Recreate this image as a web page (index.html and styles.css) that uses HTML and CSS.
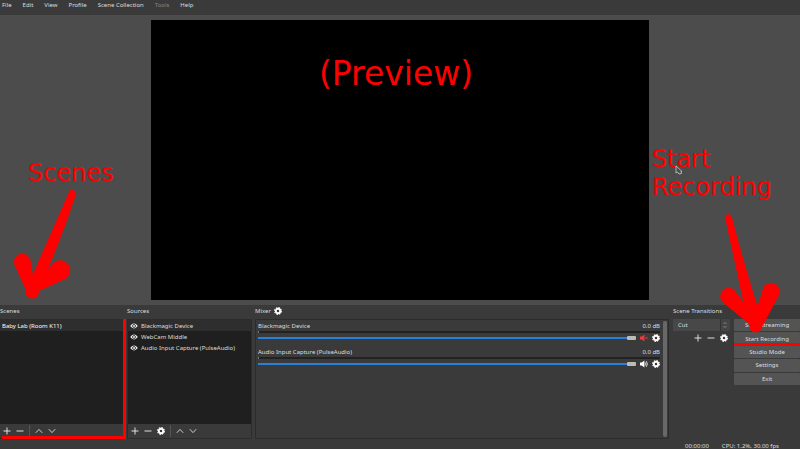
FILE: index.html
```html
<!DOCTYPE html>
<html lang="en">
<head>
<meta charset="utf-8">
<title>Studio</title>
<link rel="stylesheet" href="styles.css">
</head>
<body>
<svg class="defs" aria-hidden="true">
  <symbol id="plus" viewBox="0 0 8 8"><path d="M4 .5v7M.5 4h7" fill="none" stroke="currentColor"/></symbol>
  <symbol id="minus" viewBox="0 0 8 8"><path d="M.5 4h7" fill="none" stroke="currentColor"/></symbol>
  <symbol id="up" viewBox="0 0 8 8"><path d="M.8 5.8 4 2.4l3.2 3.4" fill="none" stroke="currentColor" stroke-width=".9"/></symbol>
  <symbol id="down" viewBox="0 0 8 8"><path d="M.8 2.2 4 5.6l3.2-3.4" fill="none" stroke="currentColor" stroke-width=".9"/></symbol>
  <symbol id="gear" viewBox="0 0 8 8"><circle cx="4" cy="4" r="2.2" fill="none" stroke="currentColor" stroke-width="1.9"/><circle cx="4" cy="4" r="3.4" fill="none" stroke="currentColor" stroke-width="1.1" stroke-dasharray="1.5 1.17"/></symbol>
  <symbol id="eye" viewBox="0 0 8 8"><path d="M.2 4Q4-.9 7.800 4 4 8.900.2 4z" fill="currentColor"/><circle cx="4" cy="4" r="1.500" fill="none" stroke="#222" stroke-width=".8"/></symbol>
  <symbol id="speaker" viewBox="0 0 8 8"><path d="M0 2.500h1.800L4.400.6v6.800L1.800 5.500H0z" fill="currentColor"/><path d="M5.300 2.500q1.200 1.500 0 3M6.300 1.200q2.200 2.800 0 5.600" fill="none" stroke="currentColor" stroke-width=".8"/></symbol>
  <symbol id="muted" viewBox="0 0 8 8"><path d="M0 2.500h1.800L4.400.6v6.800L1.800 5.500H0z" fill="currentColor"/><path d="m5.300 2.800 2.400 2.400m0-2.400L5.300 5.200" fill="none" stroke="currentColor" stroke-width=".8"/></symbol>
</svg>

<nav class="menubar">
  <button>File</button><button>Edit</button><button>View</button><button>Profile</button><button>Scene Collection</button><button disabled>Tools</button><button>Help</button>
</nav>

<main class="stage">
  <div class="preview"><span class="note note-preview">(Preview)</span></div>
</main>

<div class="docks">
  <section class="dock">
    <h2>Scenes</h2>
    <div class="panel marked">
      <ul class="list scenes"><li class="selected">Baby Lab (Room K11)</li></ul>
      <div class="toolbar">
        <button aria-label="Add scene"><svg><use href="#plus"/></svg></button>
        <button aria-label="Remove scene"><svg><use href="#minus"/></svg></button>
        <i class="divider"></i>
        <button aria-label="Move scene up"><svg><use href="#up"/></svg></button>
        <button aria-label="Move scene down"><svg><use href="#down"/></svg></button>
      </div>
    </div>
  </section>

  <section class="dock">
    <h2>Sources</h2>
    <div class="panel">
      <ul class="list">
        <li class="selected"><svg><use href="#eye"/></svg>Blackmagic Device</li>
        <li><svg><use href="#eye"/></svg>WebCam Middle</li>
        <li><svg><use href="#eye"/></svg>Audio Input Capture (PulseAudio)</li>
      </ul>
      <div class="toolbar">
        <button aria-label="Add source"><svg><use href="#plus"/></svg></button>
        <button aria-label="Remove source"><svg><use href="#minus"/></svg></button>
        <button class="bright" aria-label="Source properties"><svg><use href="#gear"/></svg></button>
        <i class="divider"></i>
        <button aria-label="Move source up"><svg><use href="#up"/></svg></button>
        <button aria-label="Move source down"><svg><use href="#down"/></svg></button>
      </div>
    </div>
  </section>

  <section class="dock">
    <h2>Mixer <button class="bright" aria-label="Mixer settings"><svg><use href="#gear"/></svg></button></h2>
    <div class="panel mixer">
      <div class="channels">
        <div class="channel">
          <div class="channel-head"><label for="vol1">Blackmagic Device</label><span>0.0 dB</span></div>
          <div class="meter"></div>
          <div class="channel-controls">
            <input type="range" id="vol1" value="100">
            <button class="mute" aria-label="Unmute"><svg><use href="#muted"/></svg></button>
            <button class="bright" aria-label="Channel settings"><svg><use href="#gear"/></svg></button>
          </div>
        </div>
        <div class="channel">
          <div class="channel-head"><label for="vol2">Audio Input Capture (PulseAudio)</label><span>0.0 dB</span></div>
          <div class="meter"></div>
          <div class="channel-controls">
            <input type="range" id="vol2" value="100">
            <button class="bright" aria-label="Mute"><svg><use href="#speaker"/></svg></button>
            <button class="bright" aria-label="Channel settings"><svg><use href="#gear"/></svg></button>
          </div>
        </div>
      </div>
      <div class="scrollbar"></div>
    </div>
  </section>

  <section class="dock transitions">
    <h2>Scene Transitions</h2>
    <div class="select">
      <select aria-label="Transition"><option>Cut</option></select>
      <svg viewBox="0 0 8 8"><path d="M2.500 3 4 1.400 5.500 3M2.500 5 4 6.600 5.500 5" fill="none" stroke="currentColor" stroke-width=".7"/></svg>
    </div>
    <div class="toolbar">
      <button aria-label="Add transition"><svg><use href="#plus"/></svg></button>
      <button aria-label="Remove transition"><svg><use href="#minus"/></svg></button>
      <button class="bright" aria-label="Transition properties"><svg><use href="#gear"/></svg></button>
    </div>
  </section>

  <section class="dock">
    <h2></h2>
    <div class="controls">
      <button>Start Streaming</button>
      <button class="underlined">Start Recording</button>
      <button>Studio Mode</button>
      <button>Settings</button>
      <button>Exit</button>
    </div>
  </section>
</div>

<footer class="statusbar"><span>00:00:00</span><span>CPU: 1.2%, 30.00 fps</span></footer>

<span class="note note-scenes">Scenes</span>
<span class="note note-recording">Start<br>Recording</span>
<svg class="arrow arrow-scenes" viewBox="0 180 100 130" aria-hidden="true">
  <path d="M68.800 192.400A3.600 3.600 0 0 1 75.700 194.600Q64 231 47.700 269.500L54 262.500A10 10 0 1 1 66.500 278.200L39 291A7 7 0 1 1 25.500 289L14.500 265A8.400 8.400 0 1 1 30.700 261L32.700 274.500Z"/>
</svg>
<svg class="arrow arrow-recording" viewBox="700 200 100 140" aria-hidden="true">
  <path d="M725.200 218.500A3.300 3.300 0 0 1 731.700 216.700Q743 260 757.500 306.500L762.800 289A8.700 8.700 0 1 1 779.300 294.500L762 327A6.600 6.600 0 0 1 750 329.500L748.500 323.500 722.500 302A8.300 8.300 0 1 1 734.800 290.500L743.500 302.500Z"/>
</svg>
<svg class="cursor" viewBox="0 0 8 10" aria-hidden="true"><path d="M1 1v7l1.500-1 1.500 2 2.500-.5L6 6.500h1z" fill="#4c4c4c" stroke="#ccc" stroke-width=".8"/></svg>
</body>
</html>
```
FILE: styles.css
```css
* { box-sizing: border-box; }

body {
  margin: 0;
  height: 100vh;
  position: relative;
  display: flex;
  flex-direction: column;
  overflow: hidden;
  background: #3a3a3a;
  color: #dedede;
  font: 6px/10px "Noto Sans", sans-serif;
}

button, select {
  margin: 0;
  padding: 0;
  border: 0;
  background: none;
  color: inherit;
  font: inherit;
}

svg { display: block; width: 8px; height: 8px; flex: none; }
.defs { position: absolute; width: 0; height: 0; }
.bright { color: #fff; }

.menubar {
  display: flex;
  gap: 11px;
  height: 15px;
  padding: 0 2px 5px;
}
.menubar button:disabled { color: #858585; }

.stage {
  flex: 1;
  min-height: 0;
  display: flex;
  justify-content: center;
  padding: 5px;
  background: #4c4c4c;
}
.preview {
  height: 100%;
  aspect-ratio: 16 / 9;
  padding: 34px 8px 0 0;
  background: #000;
  text-align: center;
}

.docks {
  display: grid;
  grid-template-columns: 124fr 125fr 414fr 59fr 66fr;
  gap: 3px;
  height: 134px;
}
.dock { display: flex; flex-direction: column; min-width: 0; }
.dock h2 {
  display: flex;
  align-items: center;
  gap: 3px;
  height: 14px;
  flex: none;
  margin: 0;
  padding-bottom: 2px;
  font: inherit;
  white-space: nowrap;
}
.panel {
  flex: 1;
  display: flex;
  flex-direction: column;
  border: 1px solid #2c2c2c;
}
.marked { position: relative; border-left: 0; }
.marked::after {
  content: "";
  position: absolute;
  inset: -1px -3px -1px 2px;
  border: solid #f00;
  border-width: 0 3px 3px 0;
}

.list {
  flex: 1;
  margin: 0;
  padding: 0;
  list-style: none;
  background: #1f1f1f;
}
.list li {
  display: flex;
  align-items: center;
  gap: 3px;
  height: 11px;
  padding-left: 2px;
  white-space: nowrap;
}
.list svg { color: #eee; }
.list .selected { background: #2e2e2e; }
.scenes { color: #fff; }

.toolbar {
  display: flex;
  align-items: center;
  gap: 5px;
  height: 14px;
  padding-left: 3px;
}
.divider { width: 1px; height: 12px; background: #555; }

.mixer { flex-direction: row; gap: 2px; padding: 1px; }
.channels { flex: 1; padding: 0 1px; }
.channel { height: 26px; }
.channel-head { display: flex; justify-content: space-between; }
.meter { height: 2px; background: #222; border-left: 1px solid #777; }
.channel-controls {
  display: flex;
  align-items: center;
  gap: 4px;
  height: 10px;
}
.channel-controls input {
  flex: 1;
  min-width: 0;
  height: 4px;
  margin: 0;
  appearance: none;
  background: linear-gradient(#2980d9, #2980d9) center / 100% 2px no-repeat;
}
.channel-controls input::-webkit-slider-thumb {
  appearance: none;
  width: 9px;
  height: 4px;
  border-radius: 1px;
  background: #bbb;
}
.mute { color: #ee3a3a; }
.scrollbar { width: 4px; border-radius: 2px; background: #686868; }

.transitions { padding: 0 1px; }
.select { position: relative; }
.select select {
  display: block;
  appearance: none;
  width: 100%;
  height: 12px;
  padding-left: 5px;
  border-radius: 1px;
  background: linear-gradient(90deg, #484848 82%, #333 82%, #333 84%, #444 84%);
}
.select svg { position: absolute; top: 2px; right: 1px; color: #999; }
.transitions .toolbar { justify-content: flex-end; padding-right: 2px; }

.controls { display: grid; grid-auto-rows: 1fr; gap: 1px; height: 66px; }
.controls button { border-radius: 1px; background: #545454; }
.underlined { position: relative; }
.underlined::after {
  content: "";
  position: absolute;
  inset: auto 0 -1px;
  height: 3px;
  background: #f00;
}

.statusbar {
  display: flex;
  justify-content: flex-end;
  gap: 13px;
  height: 10px;
  padding: 2px 21px 0 0;
}

.note { color: #f00; font: 24px/28px "DejaVu Sans", sans-serif; }
.note-preview { display: block; font-size: 33px; line-height: 40px; }
.note-scenes { position: absolute; left: 28px; top: 159px; }
.note-recording { position: absolute; right: 28px; top: 145px; }
.arrow { position: absolute; fill: #f00; }
.arrow-scenes { left: 0; bottom: 139px; width: 100px; height: 130px; }
.arrow-recording { right: 0; bottom: 109px; width: 100px; height: 140px; }
.cursor { position: absolute; right: 117px; top: 165px; width: 8px; height: 10px; }
```
